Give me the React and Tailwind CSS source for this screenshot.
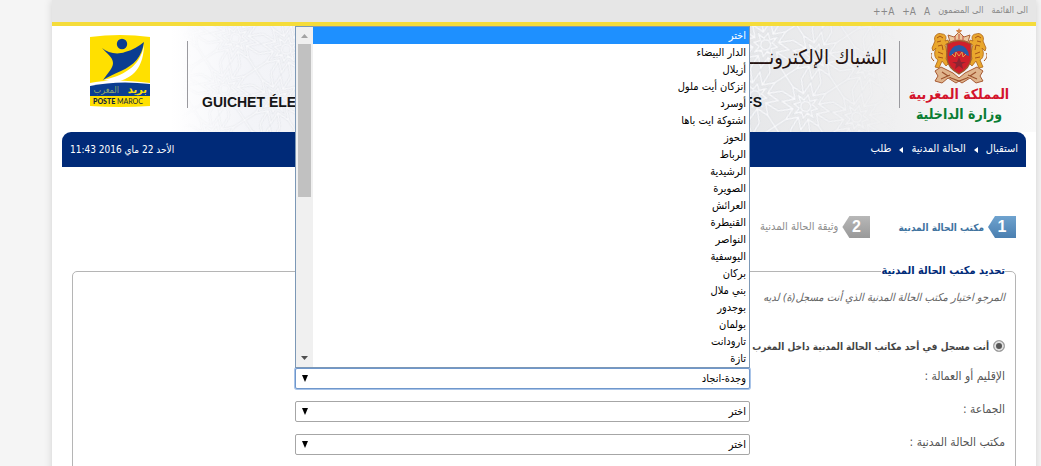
const TOP_LINKS = ['الى القائمة', 'الى المضمون', 'A', 'A+', 'A++'];

const CRUMBS = ['استقبال', 'الحالة المدنية', 'طلب'];

const PROVINCES = [
  'اختر',
  'الدار البيضاء',
  'أزيلال',
  'إنزكان أيت ملول',
  'أوسرد',
  'اشتوكة ايت باها',
  'الحوز',
  'الرباط',
  'الرشيدية',
  'الصويرة',
  'العرائش',
  'القنيطرة',
  'النواصر',
  'اليوسفية',
  'بركان',
  'بني ملال',
  'بوجدور',
  'بولمان',
  'تارودانت',
  'تازة',
];

function PosteLogo() {
  return (
    <svg viewBox="0 0 60 72" className="h-[72px] w-[60px]" role="img" aria-label="Poste Maroc">
      <path d="M0 2Q30-2 60 2V71Q30 73 0 71Z" fill="#ffe000" />
      <path d="M13 45C38 40 52 28 54 8C54 32 44 43 26 47Z" fill="#fff" />
      <path d="M0 48Q22 43 60 48V51Q24 47 0 52Z" fill="#fff" />
      <circle cx="32" cy="9" r="5.2" fill="#0a3d91" />
      <path d="M12 13C18 18 27 20 35 17C43 15 49 11 54 7C52 22 44 30 31 36C24 39 18 42 13 45C18 38 23 33 23 28C23 22 17 19 12 13Z" fill="#0a3d91" />
      <path d="M0 51Q28 45 60 49V61H0Z" fill="#0a3d91" />
      <text x="57" y="58" direction="rtl" fontSize="11" fontWeight="bold" fill="#ffe000" fontFamily="DejaVu Sans Condensed, DejaVu Sans, sans-serif">بريد</text>
      <text x="29" y="58" direction="rtl" fontSize="9" fill="#8ea86a" fontFamily="DejaVu Sans Condensed, DejaVu Sans, sans-serif">المغرب</text>
      <text x="3" y="69" fontSize="7" fontFamily="Lato, sans-serif" fill="#10233f" direction="ltr">
        <tspan fontWeight="900">POSTE</tspan> MAROC
      </text>
    </svg>
  );
}

function Lion() {
  return (
    <g>
      <path d="M4 13C2 8 7 4 11 6C15 6 16 10 14 13L17 12L18 15L14 17C16 22 16 27 15 31L18 35L15 38L11 33L8 40L4 39L7 32C3 30 3 24 5 20L2 23L1 20Z" fill="#e9a72d" stroke="#ad6318" strokeWidth="0.8" />
      <path d="M6 10L9 8L12 10M6 14L10 13M7 18L11 17L12 22M7 24L12 26M7 29L12 30M3 33C0 30-1 27 1 25" fill="none" stroke="#a85316" />
    </g>
  );
}

function CoatOfArms() {
  return (
    <svg viewBox="0 0 56 58" className="h-[58px] w-[56px]" aria-hidden="true">
      <path d="M4 43L10 39L22 45L28 50L34 45L46 39L52 43L49 48L52 53L45 55L39 50L31 55L28 53L25 55L17 50L11 55L4 53L7 48Z" fill="#dfb48c" stroke="#a85b34" />
      <path d="M11 44L20 50L28 53L36 50L45 44M10 51L19 47M46 51L37 47" fill="none" stroke="#9c512d" strokeWidth="1.2" />
      <Lion />
      <g transform="translate(56 0) scale(-1 1)">
        <Lion />
      </g>
      <path d="M16 16Q28 9 40 16V31Q39 40 28 46Q17 40 16 31Z" fill="#cf202b" stroke="#9b5a2c" strokeWidth="1.4" />
      <path d="M18 28Q19 18 28 17Q37 18 38 28L35 27L32 24L28 23L24 24L21 27Z" fill="#285aa6" />
      <path d="M21 26L24 29L25 24L28 28L31 24L32 29L35 26" fill="none" stroke="#e2a04c" />
      <path d="M28 29L30 34H35L31 36L32 41L28 38L24 41L25 36L21 34H26Z" fill="#8d2432" />
      <path d="M19 14L17 7L23 9L28 4L33 9L39 7L37 14Q28 10 19 14Z" fill="#ecc99f" stroke="#ae6337" />
      <path d="M24 12V8M28 11V6M32 12V8" stroke="#c24b38" />
      <path d="M28 0L29 2H31L30 4L28 5L26 4L25 2H27Z" fill="#d6874a" />
    </svg>
  );
}

function Zellige() {
  return (
    <svg className="absolute inset-0 h-full w-full" aria-hidden="true">
      <defs>
        <g id="star" fill="none">
          <path d="M26 2L31 14L43 9L38 21L50 26L38 31L43 43L31 38L26 50L21 38L9 43L14 31L2 26L14 21L9 9L21 14Z" />
          <path d="M26 14L29 20L35 17L32 23L38 26L32 29L35 35L29 32L26 38L23 32L17 35L20 29L14 26L20 23L17 17L23 20Z" />
          <path d="M0 0L9 9M52 0L43 9M0 52L9 43M52 52L43 43M0 16L14 21M0 36L14 31M52 16L38 21M52 36L38 31M16 0L21 14M36 0L31 14M16 52L21 38M36 52L31 38" />
          <circle cx="26" cy="26" r="5" />
        </g>
        <pattern id="zellige" width="52" height="52" patternUnits="userSpaceOnUse" patternTransform="rotate(12)">
          <use href="#star" stroke="#dadde2" strokeWidth="2.600" />
          <use href="#star" stroke="#fbfbfd" strokeWidth="1.400" />
        </pattern>
        <linearGradient id="fade">
          <stop offset="0.13" stopColor="#000" />
          <stop offset="0.2" stopColor="#999" />
          <stop offset="0.76" stopColor="#ddd" />
          <stop offset="0.86" stopColor="#000" />
        </linearGradient>
        <mask id="fade-mask">
          <rect width="100%" height="100%" fill="url(#fade)" />
        </mask>
      </defs>
      <rect width="100%" height="100%" fill="url(#zellige)" mask="url(#fade-mask)" />
    </svg>
  );
}

function Header() {
  return (
    <header className="relative flex h-[106px] bg-[linear-gradient(to_right,#fff_12%,#f3f4f8_20%,#e6e7e9_70%,#f0f0f1_86%,#fafafa)] pr-[18px] pl-[38px]">
      <Zellige />
      <div className="relative flex w-[118px] flex-col items-center pt-0.5">
        <CoatOfArms />
        <p className="-mt-0.5 text-sm leading-5 font-bold whitespace-nowrap text-[#d3142c]">المملكة المغربية</p>
        <p className="text-sm leading-5 font-bold whitespace-nowrap text-[#0a7d33]">وزارة الداخلية</p>
      </div>
      <div className="relative mt-[15px] mb-6 flex min-w-0 flex-1 flex-col justify-between border-x border-[#9a9a9f] px-3 whitespace-nowrap">
        <h1 className="text-xl leading-8 text-[#24110f]">الشباك الإلكترونــــي لطلب الوثائق الإدارية</h1>
        <p
          dir="ltr"
          className="flex w-[562px] justify-between self-end pl-0.5 font-['Liberation_Sans',sans-serif] text-sm leading-3 font-bold text-[#151515]"
        >
          <span>GUICHET ÉLECTRONIQUE</span>
          <span>DES DOCUMENTS ADMINISTRATIFS</span>
        </p>
      </div>
      <div className="relative mr-[37px] pt-[9px]">
        <PosteLogo />
      </div>
    </header>
  );
}

function Step({ number, label, active }) {
  return (
    <li className="flex h-[22px] items-center gap-1">
      <span
        className={
          'flex h-full w-7 items-center justify-center font-["Liberation_Sans",sans-serif] text-base font-bold text-white [clip-path:polygon(0_50%,25%_0,100%_0,100%_100%,25%_100%)] ' +
          (active ? 'bg-linear-to-b from-[#6fa3cf] to-[#4a7fb0]' : 'bg-linear-to-b from-[#b8b8b8] to-[#999]')
        }
      >
        {number}
      </span>
      <span className={active ? 'text-[10px] font-bold text-[#3f739f]' : 'text-[11px] text-[#8c8c8c]'}>{label}</span>
    </li>
  );
}

function ProvinceList() {
  return (
    <div className="absolute inset-x-0 bottom-full z-10 flex border border-[#7c98b6] bg-white">
      <ul role="listbox" aria-label="الإقليم أو العمالة" className="flex-1 text-[11px] leading-[17px] text-black">
        {PROVINCES.map((name, i) => (
          <li
            key={name}
            role="option"
            aria-selected={i === 0}
            className={i === 0 ? 'bg-[#1e90ff] px-[3px] text-white' : 'px-[3px]'}
          >
            {name}
          </li>
        ))}
      </ul>
      <div className="flex w-[17px] flex-col items-center justify-between bg-[#f0f0f0]">
        <div className="flex w-full flex-col items-center">
          <svg viewBox="0 0 17 17" className="h-[17px] w-[17px]">
            <path d="M5 11L8.500 7L12 11Z" fill="#a3a3a3" />
          </svg>
          <div className="h-[153px] w-[13px] bg-[#c1c1c1]" />
        </div>
        <svg viewBox="0 0 17 17" className="h-[17px] w-[17px]">
          <path d="M5 6H12L8.500 10Z" fill="#505050" />
        </svg>
      </div>
    </div>
  );
}

function SelectRow({ id, label, value, open }) {
  return (
    <div className="flex h-[21px] items-start">
      <label htmlFor={id} className="w-[255px] text-xs leading-4 text-[#555]">
        {label} :
      </label>
      <div className="relative w-[455px]">
        {open && <ProvinceList />}
        <select
          id={id}
          className={
            'block h-[21px] w-full appearance-none rounded-xs border bg-white px-[3px] text-[11px] leading-4 text-black outline-none ' +
            (open ? 'border-[#6f97cc] ring-1 ring-[#a9c4e8]' : 'border-[#a6a6a6]')
          }
        >
          <option>{value}</option>
        </select>
        <svg viewBox="0 0 6 7" className="pointer-events-none absolute top-[7px] left-[7px] h-[7px] w-1.5">
          <path d="M0 0H6L3 7Z" />
        </svg>
      </div>
    </div>
  );
}

export default function App() {
  return (
    <div
      dir="rtl"
      className="h-screen overflow-hidden bg-[#f5f5f5] pr-[5px] pl-[52px] font-['DejaVu_Sans_Condensed','DejaVu_Sans',sans-serif]"
    >
      <div className="min-h-full bg-white shadow-[0_0_8px_rgba(0,0,0,0.15)]">
        <nav className="flex h-[26px] items-center gap-2 border-b-4 border-[#f5dc3a] bg-[#e6e6e6] px-2 text-[9px] text-[#888]">
          {TOP_LINKS.map((link) => (
            <a key={link} href="#" className={link[0] === 'A' ? 'text-[10px]' : ''}>
              {link}
            </a>
          ))}
        </nav>
        <Header />
        <div className="mx-2.5 flex h-[35px] items-center justify-between rounded-t-[9px] bg-[#002a78] px-2 text-[11px] text-white">
          <nav className="flex items-center gap-2">
            {CRUMBS.map((crumb, i) => (
              <div key={crumb} className="flex items-center gap-2">
                {i > 0 && (
                  <svg viewBox="0 0 4 6" className="h-1.5 w-1">
                    <path d="M4 0V6L0 3Z" fill="#fff" />
                  </svg>
                )}
                <a href="#">{crumb}</a>
              </div>
            ))}
          </nav>
          <time className="text-[10px]">الأحد 22 ماي 2016 11:43</time>
        </div>
        <main className="px-5 pt-[49px]">
          <ol className="flex gap-7 whitespace-nowrap">
            <Step number={1} label="مكتب الحالة المدنية" active />
            <Step number={2} label="وثيقة الحالة المدنية" />
          </ol>
          <fieldset className="mt-[26px] rounded-[5px] border border-[#b5b5b5] px-2.5 pb-10">
            <legend className="text-[11px] leading-[14px] font-bold text-[#002a78]">تحديد مكتب الحالة المدنية</legend>
            <p className="mt-3 text-[11px] leading-4 text-[#666] italic">
              المرجو اختيار مكتب الحالة المدنية الذي أنت مسجل(ة) لديه
            </p>
            <label className="mt-8 flex h-4 items-center gap-1 text-[10px] font-bold whitespace-nowrap text-[#444]">
              <input
                type="radio"
                name="place"
                defaultChecked
                className="h-3 w-3 appearance-none rounded-full border border-[#aaa] bg-[#555] shadow-[inset_0_0_0_2px_#e0e0e0]"
              />
              أنت مسجل في أحد مكاتب الحالة المدنية داخل المغرب
            </label>
            <div className="mt-3.5 flex flex-col gap-3">
              <SelectRow id="province" label="الإقليم أو العمالة" value="وجدة-انجاد" open />
              <SelectRow id="commune" label="الجماعة" value="اختر" />
              <SelectRow id="office" label="مكتب الحالة المدنية" value="اختر" />
            </div>
          </fieldset>
        </main>
      </div>
    </div>
  );
}
